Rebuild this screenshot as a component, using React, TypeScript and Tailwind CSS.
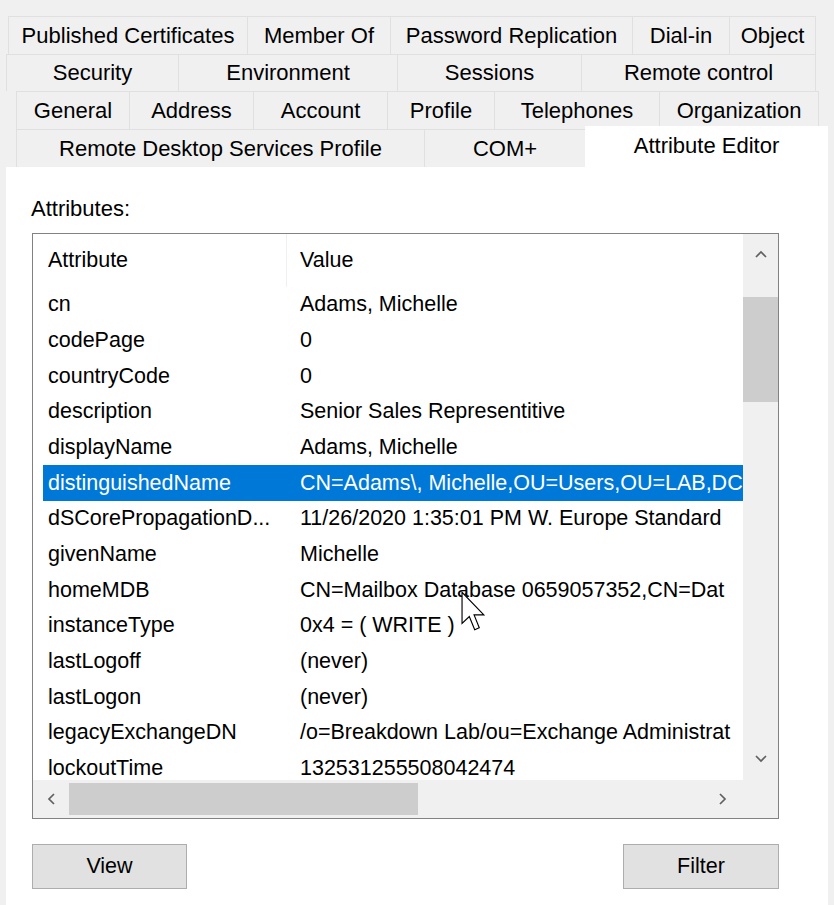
import React from 'react'

type Tab = { label: string; w: string }

const row1: Tab[] = [
  { label: 'Published Certificates', w: 'w-[240px]' },
  { label: 'Member Of', w: 'w-[143px]' },
  { label: 'Password Replication', w: 'w-[242px]' },
  { label: 'Dial-in', w: 'w-[97px]' },
  { label: 'Object', w: 'w-[86px]' },
]
const row2: Tab[] = [
  { label: 'Security', w: 'w-[173px]' },
  { label: 'Environment', w: 'w-[219px]' },
  { label: 'Sessions', w: 'w-[184px]' },
  { label: 'Remote control', w: 'w-[234px]' },
]
const row3: Tab[] = [
  { label: 'General', w: 'w-[114px]' },
  { label: 'Address', w: 'w-[124px]' },
  { label: 'Account', w: 'w-[134px]' },
  { label: 'Profile', w: 'w-[107px]' },
  { label: 'Telephones', w: 'w-[165px]' },
  { label: 'Organization', w: 'w-[159px]' },
]

const attrs: [string, string][] = [
  ['cn', 'Adams, Michelle'],
  ['codePage', '0'],
  ['countryCode', '0'],
  ['description', 'Senior Sales Representitive'],
  ['displayName', 'Adams, Michelle'],
  ['distinguishedName', 'CN=Adams\\, Michelle,OU=Users,OU=LAB,DC'],
  ['dSCorePropagationD...', '11/26/2020 1:35:01 PM W. Europe Standard'],
  ['givenName', 'Michelle'],
  ['homeMDB', 'CN=Mailbox Database 0659057352,CN=Dat'],
  ['instanceType', '0x4 = ( WRITE )'],
  ['lastLogoff', '(never)'],
  ['lastLogon', '(never)'],
  ['legacyExchangeDN', '/o=Breakdown Lab/ou=Exchange Administrat'],
  ['lockoutTime', '132531255508042474'],
]

function TabRow({ tabs, offset }: { tabs: Tab[]; offset: string }) {
  return (
    <div className={`flex h-[37.5px] border-t border-[#e0e0e0] ${offset} w-fit`}>
      {tabs.map((t, i) => (
        <div
          key={t.label}
          className={`${t.w} flex items-center justify-center border-r border-[#e0e0e0] ${i === 0 ? 'border-l' : ''}`}
        >
          {t.label}
        </div>
      ))}
    </div>
  )
}

function Chevron({ dir }: { dir: 'up' | 'down' | 'left' | 'right' }) {
  const pts = {
    up: '1,7 6,2 11,7',
    down: '1,2 6,7 11,2',
    left: '7,1 2,6 7,11',
    right: '2,1 7,6 2,11',
  }[dir]
  const vert = dir === 'up' || dir === 'down'
  return (
    <svg width={vert ? 12 : 9} height={vert ? 9 : 12} viewBox={vert ? '0 0 12 9' : '0 0 9 12'}>
      <polyline points={pts} fill="none" stroke="#606060" strokeWidth="1.7" />
    </svg>
  )
}

export default function App() {
  return (
    <div className="relative w-[834px] h-[905px] overflow-hidden bg-[#f0f0f0] font-['Liberation_Sans',Arial,sans-serif] text-black">
      {/* tab strip */}
      <div className="pt-[16px] text-[22px]">
        <TabRow tabs={row1} offset="ml-[8px]" />
        <TabRow tabs={row2} offset="ml-[6px]" />
        <TabRow tabs={row3} offset="ml-[16px]" />
        <div className="flex h-[38px] border-t border-[#e0e0e0] ml-[16px] w-fit">
          <div className="w-[409px] flex items-center justify-center border-l border-r border-[#e0e0e0]">
            Remote Desktop Services Profile
          </div>
          <div className="w-[160px] flex items-center justify-center">COM+</div>
          <div className="relative z-10 w-[243px] h-[42px] -mt-[4px] bg-white flex items-start justify-center pt-[3px]">
            Attribute Editor
          </div>
        </div>
      </div>

      {/* page */}
      <div className="mx-[6px] h-[738px] bg-white">
        <div className="pt-[30px] pl-[25px] text-[22px] leading-[24px]">Attributes:</div>

        <div className="ml-[26px] mt-[12px] w-[747px] h-[586px] border border-[#828282] flex flex-col text-[21.5px]">
          <div className="flex flex-1 min-h-0">
            <div className="flex-1 overflow-hidden bg-white">
              <div className="flex h-[53px]">
                <div className="w-[254px] shrink-0 pl-[15px] flex items-center border-r border-[#f0f0f0]">
                  Attribute
                </div>
                <div className="pl-[13px] flex items-center">Value</div>
              </div>
              {attrs.map(([k, v]) => (
                <div
                  key={k}
                  className={`flex h-[35.7px] items-center ml-[10px] whitespace-nowrap ${
                    k === 'distinguishedName' ? 'bg-[#0078d7] text-white' : ''
                  }`}
                >
                  <div className="w-[244px] shrink-0 pl-[5px]">{k}</div>
                  <div className="pl-[13px]">{v}</div>
                </div>
              ))}
            </div>
            <div className="w-[35px] bg-[#f0f0f0] flex flex-col">
              <div className="h-[42px] flex items-center justify-center">
                <Chevron dir="up" />
              </div>
              <div className="h-[21px]" />
              <div className="h-[105px] bg-[#cdcdcd]" />
              <div className="flex-1" />
              <div className="h-[42px] flex items-center justify-center">
                <Chevron dir="down" />
              </div>
            </div>
          </div>
          <div className="h-[38px] bg-[#f0f0f0] flex items-center">
            <div className="w-[36px] h-full flex items-center justify-center">
              <Chevron dir="left" />
            </div>
            <div className="w-[349px] h-[32px] bg-[#cdcdcd]" />
            <div className="flex-1" />
            <div className="w-[36px] h-full flex items-center justify-center">
              <Chevron dir="right" />
            </div>
            <div className="w-[38px]" />
          </div>
        </div>

        <div className="ml-[26px] mt-[25px] w-[747px] flex justify-between text-[21.5px]">
          <button className="w-[155px] h-[45px] bg-[#e1e1e1] border border-[#adadad]">View</button>
          <button className="w-[156px] h-[45px] bg-[#e1e1e1] border border-[#adadad]">Filter</button>
        </div>
      </div>

      {/* mouse pointer */}
      <svg className="absolute left-[461px] top-[591px]" width="27" height="42" viewBox="0 0 13 20">
        <path d="M0.5 0.5 L0.5 15.5 L4 12.2 L6.6 18.5 L8.8 17.6 L6.3 11.4 L11 11.4 Z" fill="#fff" stroke="#000" strokeWidth="0.55" />
      </svg>
    </div>
  )
}
